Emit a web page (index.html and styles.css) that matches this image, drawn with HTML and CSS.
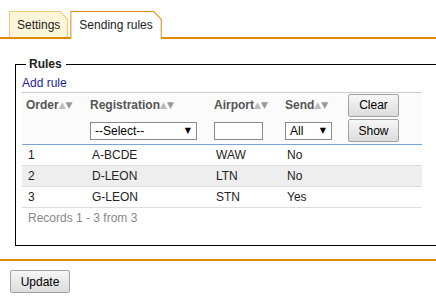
FILE: index.html
```html
<!DOCTYPE html>
<html lang="en">
  <head>
    <meta charset="UTF-8" />
    <meta name="viewport" content="width=device-width, initial-scale=1.0" />
    <title>Sending rules</title>
    <link rel="stylesheet" href="styles.css">
  </head>
  <body>
    <div class="tabs">
      <div class="tab"><span>Settings</span></div>
      <div class="tab active"><span>Sending rules</span></div>
    </div>

    <fieldset class="rules">
      <legend>Rules</legend>
      <a class="addRule" href="#">Add rule</a>
      <table class="rulesTable">
        <colgroup>
          <col style="width: 64px" />
          <col style="width: 124px" />
          <col style="width: 71px" />
          <col style="width: 63px" />
          <col style="width: 78px" />
        </colgroup>
        <thead>
          <tr class="headRow">
            <th>Order<span class="up">&#9650;</span><span class="down">&#9660;</span></th>
            <th>Registration<span class="up">&#9650;</span><span class="down">&#9660;</span></th>
            <th>Airport<span class="up">&#9650;</span><span class="down">&#9660;</span></th>
            <th>Send<span class="up">&#9650;</span><span class="down">&#9660;</span></th>
            <th><button class="btn smallBtn">Clear</button></th>
          </tr>
          <tr class="filterRow">
            <th></th>
            <th>
              <span class="selectWrap regSelect">
                <select><option>--Select--</option></select>
              </span>
            </th>
            <th><input class="airportInput" type="text" /></th>
            <th>
              <span class="selectWrap sendSelect">
                <select><option>All</option></select>
              </span>
            </th>
            <th><button class="btn smallBtn">Show</button></th>
          </tr>
        </thead>
        <tbody>
          <tr>
            <td>1</td>
            <td>A-BCDE</td>
            <td>WAW</td>
            <td>No</td>
            <td></td>
          </tr>
          <tr class="odd">
            <td>2</td>
            <td>D-LEON</td>
            <td>LTN</td>
            <td>No</td>
            <td></td>
          </tr>
          <tr>
            <td>3</td>
            <td>G-LEON</td>
            <td>STN</td>
            <td>Yes</td>
            <td></td>
          </tr>
        </tbody>
        <tfoot>
          <tr>
            <td colspan="5">Records 1 - 3 from 3</td>
          </tr>
        </tfoot>
      </table>
    </fieldset>

    <div class="actions">
      <button class="btn updateBtn">Update</button>
    </div>
  </body>
</html>
```

FILE: styles.css
```css
:root {
  --orange: #e08a0b;
  --tab-border: #f2c86e;
  --tab-bg: #fff6da;
  --row-border: #dddddd;
  --text-color: #222;
}

html,
body {
  overflow: hidden;
}

body {
  margin: 0;
  font-family: "Liberation Sans", Arial, sans-serif;
  font-size: 12px;
  color: var(--text-color);
}

/* tabs */
.tabs {
  display: flex;
  align-items: flex-end;
  gap: 2px;
  padding: 11px 0 0 9px;
  border-bottom: 2px solid var(--orange);
}

.tab {
  padding: 1px 1px 0 1px;
  background-color: var(--tab-border);
  clip-path: polygon(0 0, calc(100% - 8px) 0, 100% 8px, 100% 100%, 0 100%);
}

.tab span {
  display: block;
  height: 25px;
  line-height: 27px;
  padding: 0 7px;
  background-color: var(--tab-bg);
  clip-path: polygon(0 0, calc(100% - 7.5px) 0, 100% 7.5px, 100% 100%, 0 100%);
}

.tab.active {
  background-color: var(--orange);
  margin-bottom: -2px;
}

.tab.active span {
  height: 27px;
  padding: 0 8px;
  background-color: #fff;
}

/* rules box */
.rules {
  margin: 18px -14px 0 15px;
  padding: 5px 6px 17px 6px;
  border: 1px solid #000;
}

.rules legend {
  margin-left: 4px;
  padding: 0 4px 0 3px;
  font-weight: bold;
  line-height: 14px;
}

.addRule {
  display: block;
  line-height: 14px;
  margin-bottom: 2px;
  color: #1f1fa0;
  text-decoration: none;
}

.rulesTable {
  width: 400px;
  table-layout: fixed;
  border-collapse: collapse;
  border-top: 1px solid #cccccc;
}

.rulesTable th {
  text-align: left;
  padding: 0 4px;
  color: #555;
  font-weight: bold;
  background-color: #fbfbfb;
  white-space: nowrap;
}

.headRow th {
  height: 24px;
}

.filterRow th {
  height: 27px;
  border-bottom: 1px solid #7aa5d2;
}

.up,
.down {
  font-family: "DejaVu Sans", sans-serif;
  font-size: 9px;
  vertical-align: 1px;
}

.up {
  color: #bbbbbb;
}

.down {
  color: #999999;
}

.rulesTable td {
  height: 20px;
  padding: 0 6px;
  border-bottom: 1px solid var(--row-border);
}

.rulesTable tr.odd td {
  background-color: #eeeeee;
}

.rulesTable tfoot td {
  border-bottom: none;
  color: #888;
}

/* filter controls */
.selectWrap {
  position: relative;
  display: inline-block;
}

.selectWrap select {
  appearance: none;
  -webkit-appearance: none;
  display: block;
  height: 18px;
  padding: 0 0 0 4px;
  border: 1px solid #8a8a8a;
  border-radius: 0;
  background-color: #fff;
  font-family: inherit;
  font-size: 12px;
  color: #000;
}

.selectWrap::after {
  content: "\25BC";
  position: absolute;
  top: 4px;
  right: 6px;
  font-family: "DejaVu Sans", sans-serif;
  font-size: 8px;
  color: #000;
  pointer-events: none;
}

.regSelect select {
  width: 107px;
}

.sendSelect select {
  width: 47px;
}

.airportInput {
  display: block;
  width: 49px;
  height: 18px;
  box-sizing: border-box;
  border: 1px solid #8a8a8a;
  padding: 0 3px;
  font-family: inherit;
  font-size: 12px;
}

/* buttons */
.btn {
  height: 23px;
  padding: 0;
  border: 1px solid #a2a2a2;
  border-radius: 2px;
  background: linear-gradient(#f7f7f7, #dcdcdc);
  font-family: inherit;
  font-size: 12px;
  color: #000;
  cursor: pointer;
}

.smallBtn {
  display: block;
  width: 51px;
}

.updateBtn {
  width: 60px;
}

.actions {
  margin-top: 13px;
  padding: 9px 10px;
  border-top: 2px solid var(--orange);
}
```
